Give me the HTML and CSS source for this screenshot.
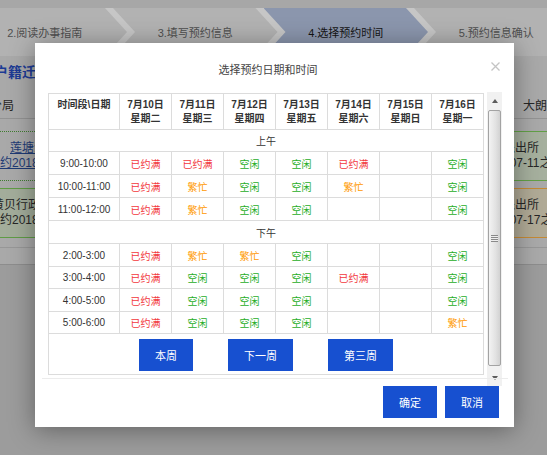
FILE: index.html
```html
<!DOCTYPE html>
<html lang="zh-CN">
<head>
<meta charset="utf-8">
<title>选择预约日期和时间</title>
<link rel="stylesheet" href="styles.css">
</head>
<body>
<div class="page">
  <div class="topstrip"></div>
  <div class="stepbar">
    <div class="step">2.阅读办事指南</div>
    <div class="step">3.填写预约信息</div>
    <div class="step active">4.选择预约时间</div>
    <div class="step">5.预约信息确认</div>
  </div>
  <div class="content">
    <div class="page-title">户籍迁入</div>
    <div class="prow head">
      <div class="pl"><div class="ln in-l1">分局</div></div>
      <div class="pr"><div class="ln in-r1">大朗派出所</div></div>
    </div>
    <div class="prow rowa">
      <div class="pl">
        <div class="ln link in-l2">莲塘派</div>
        <div class="ln link in-l3">预约2018</div>
      </div>
      <div class="pr">
        <div class="ln in-r2">莲塘派出所</div>
        <div class="ln in-r3">2018-07-11之前</div>
      </div>
    </div>
    <div class="prow rowb">
      <div class="pl">
        <div class="ln in-l4">黄贝行政</div>
        <div class="ln in-l3">预约2018</div>
      </div>
      <div class="pr">
        <div class="ln in-r2">黄贝派出所</div>
        <div class="ln in-r3">2018-07-17之前</div>
      </div>
    </div>
    <div class="pline"></div>
  </div>
</div>

<div class="modal">
  <div class="modal-head">
    <div class="modal-title">选择预约日期和时间</div>
    <span class="close"><svg width="9" height="9" viewBox="0 0 9 9"><path d="M0.5 0.5L8.5 8.5M8.5 0.5L0.5 8.5" stroke="#c4c4c4" stroke-width="1.3" fill="none"/></svg></span>
  </div>
  <div class="scrollbox">
    <div class="scroll-content">
      <table class="sched">
        <colgroup><col class="c0"><col><col><col><col><col><col><col></colgroup>
        <thead>
          <tr class="hrow">
            <th>时间段\日期</th>
            <th>7月10日<br>星期二</th>
            <th>7月11日<br>星期三</th>
            <th>7月12日<br>星期四</th>
            <th>7月13日<br>星期五</th>
            <th>7月14日<br>星期六</th>
            <th>7月15日<br>星期日</th>
            <th>7月16日<br>星期一</th>
          </tr>
        </thead>
        <tbody>
          <tr class="sec"><td colspan="8">上午</td></tr>
          <tr class="r23"><td>9:00-10:00</td><td class="full">已约满</td><td class="full">已约满</td><td class="free">空闲</td><td class="free">空闲</td><td class="full">已约满</td><td></td><td class="free">空闲</td></tr>
          <tr class="r23"><td>10:00-11:00</td><td class="full">已约满</td><td class="busy">繁忙</td><td class="free">空闲</td><td class="free">空闲</td><td class="busy">繁忙</td><td></td><td class="free">空闲</td></tr>
          <tr class="r23"><td>11:00-12:00</td><td class="full">已约满</td><td class="busy">繁忙</td><td class="free">空闲</td><td class="free">空闲</td><td></td><td></td><td class="free">空闲</td></tr>
          <tr class="sec r23"><td colspan="8">下午</td></tr>
          <tr class="r23"><td>2:00-3:00</td><td class="full">已约满</td><td class="busy">繁忙</td><td class="busy">繁忙</td><td class="free">空闲</td><td></td><td></td><td class="free">空闲</td></tr>
          <tr class="r22"><td>3:00-4:00</td><td class="full">已约满</td><td class="free">空闲</td><td class="free">空闲</td><td class="free">空闲</td><td class="full">已约满</td><td></td><td class="free">空闲</td></tr>
          <tr class="r23"><td>4:00-5:00</td><td class="full">已约满</td><td class="free">空闲</td><td class="free">空闲</td><td class="free">空闲</td><td></td><td></td><td class="free">空闲</td></tr>
          <tr class="r22"><td>5:00-6:00</td><td class="full">已约满</td><td class="free">空闲</td><td class="free">空闲</td><td class="free">空闲</td><td></td><td></td><td class="busy">繁忙</td></tr>
          <tr class="brow"><td colspan="8">
            <div class="weeks">
              <button class="btn">本周</button>
              <button class="btn">下一周</button>
              <button class="btn">第三周</button>
            </div>
          </td></tr>
        </tbody>
      </table>
    </div>
    <div class="vscroll">
      <div class="sarrow"><span class="tri-up"></span></div>
      <div class="thumb"><span class="grip"></span></div>
      <div class="sarrow"><span class="tri-down"></span></div>
    </div>
  </div>
  <div class="sep"></div>
  <div class="modal-foot">
    <button class="btn">确定</button>
    <button class="btn">取消</button>
  </div>
</div>
</body>
</html>
```

FILE: styles.css
```css
* { box-sizing: border-box; }
html, body { margin: 0; padding: 0; }
body {
  width: 547px;
  height: 455px;
  overflow: hidden;
  position: relative;
  background: #9c9c9c;
  font-family: "Liberation Sans", "Noto Sans CJK SC", sans-serif;
}

/* ---- dimmed background page ---- */
.page { height: 455px; display: flex; flex-direction: column; overflow: hidden; }
.topstrip { height: 8px; background: #a7a7a7; flex: none; }
.stepbar {
  height: 48px;
  flex: none;
  background: #c6c6c6;
  display: flex;
  overflow: hidden;
}
.step {
  flex: none;
  width: 164.5px;
  height: 48px;
  margin-right: -14px;
  background: #b2b2b2;
  clip-path: polygon(0 0, calc(100% - 22px) 0, 100% 50%, calc(100% - 22px) 100%, 0 100%, 22px 50%);
  display: flex;
  align-items: center;
  justify-content: center;
  font-size: 11px;
  color: #4f4f4f;
}
.step:first-child { margin-left: -37.5px; }
.step.active { background: #8b96ad; color: #141414; }

.content {
  flex: none;
  height: 209px;
  background: #a9a9a9;
  border-bottom: 1px solid #8d8d8d;
}
.page-title {
  width: 41px;
  overflow: hidden;
  height: 32px;
  line-height: 32px;
  margin-left: -6px;
  font-size: 14px;
  font-weight: bold;
  color: #1d3b94;
  white-space: nowrap;
}
.prow { display: flex; justify-content: space-between; }
.pl { width: 47px; margin-left: -12px; overflow: hidden; }
.pr { width: 33px; overflow: hidden; }
.ln { font-size: 12px; line-height: 15px; white-space: nowrap; color: #262626; }
.link { color: #1f3b75; text-decoration: underline; }
.in-l1 { padding-left: 2px; }
.in-l2 { padding-left: 22px; }
.in-l3 { padding-left: 0; }
.in-l4 { padding-left: 4px; }
.in-r1 { padding-left: 9px; }
.in-r2 { text-indent: -35px; }
.in-r3 { text-indent: -35px; }

.prow.head {
  height: 31px;
  padding-top: 11px;
  border-bottom: 1px solid #939393;
}
.prow.rowa { margin-top: 12px; height: 50px; }
.prow.rowa .pl {
  border-top: 1px dotted #3f7d30;
  border-bottom: 1px dotted #3f7d30;
  padding-top: 9px;
}
.prow.rowa .pr {
  background: #a6b09e;
  border-top: 1px solid #62a046;
  border-bottom: 1px solid #62a046;
  padding-top: 9px;
}
.prow.rowb { margin-top: 7px; height: 50px; }
.prow.rowb .pl {
  background: #a3ad9b;
  border-top: 1px solid #5f9c45;
  border-bottom: 1px solid #5f9c45;
  padding-top: 9px;
}
.prow.rowb .pr {
  background: #b0aa96;
  border-top: 1px solid #c58a34;
  border-bottom: 1px solid #c58a34;
  padding-top: 9px;
}
.pline { margin-top: 9px; border-top: 1px solid #979797; }

/* ---- modal ---- */
.modal {
  position: absolute;
  left: 35px;
  top: 43px;
  width: 479px;
  height: 384px;
  background: #fff;
  box-shadow: 0 3px 24px rgba(0, 0, 0, 0.38);
  display: flex;
  flex-direction: column;
  padding: 0 12px 9px 13px;
}
.modal-head {
  position: relative;
  height: 49px;
  flex: none;
  padding-top: 20px;
  padding-right: 14px;
  text-align: center;
}
.modal-title {
  font-size: 11px;
  line-height: 14px;
  color: #444;
}
.close {
  position: absolute;
  right: 2px;
  top: 19px;
  width: 9px;
  height: 9px;
  display: block;
}
.close svg { display: block; }

.scrollbox {
  height: 294px;
  flex: none;
  display: flex;
  gap: 3px;
}
.scroll-content { width: 436px; flex: none; padding-top: 1px; }

.sched {
  width: 436px;
  table-layout: fixed;
  border-collapse: collapse;
  border: 1px solid #dcdcdc;
}
.sched col.c0 { width: 71px; }
.sched th, .sched td {
  border: 1px solid #dcdcdc;
  padding: 0;
  text-align: center;
  font-size: 10px;
  color: #333;
}
.hrow th {
  height: 36px;
  vertical-align: top;
  padding-top: 4px;
  line-height: 14px;
  font-weight: bold;
}
.sec td { height: 22px; }
.r23 td { height: 23px; }
.r22 td { height: 22px; }
.sched td.full { color: #f2383c; }
.sched td.busy { color: #ff9900; }
.sched td.free { color: #27ae27; }
.brow td { height: 41px; padding-top: 1px; }

.weeks { display: flex; justify-content: center; gap: 35px; }

.btn {
  height: 32px;
  padding: 0 16px;
  border: none;
  border-radius: 0;
  background: #1750d0;
  color: #fff;
  font-family: "Liberation Sans", "Noto Sans CJK SC", sans-serif;
  font-size: 11px;
  cursor: pointer;
}

/* fake classic scrollbar */
.vscroll {
  width: 15px;
  flex: none;
  height: 294px;
  background: #f1f1f1;
  display: flex;
  flex-direction: column;
  align-items: center;
}
.sarrow {
  height: 17px;
  width: 15px;
  flex: none;
  display: flex;
  align-items: center;
  justify-content: center;
}
.tri-up {
  width: 0; height: 0;
  border-left: 3.5px solid transparent;
  border-right: 3.5px solid transparent;
  border-bottom: 4px solid #5c5c5c;
}
.tri-down {
  width: 0; height: 0;
  border-left: 3.5px solid transparent;
  border-right: 3.5px solid transparent;
  border-top: 4px solid #5c5c5c;
}
.thumb {
  width: 13px;
  height: 256px;
  flex: none;
  margin-top: 1px;
  margin-bottom: auto;
  border: 1px solid #a3a3a3;
  border-radius: 2px;
  background: linear-gradient(to right, #f3f3f3, #e2e2e2 60%, #d2d2d2);
  display: flex;
  align-items: center;
  justify-content: center;
}
.grip {
  width: 7px;
  height: 7px;
  background: repeating-linear-gradient(to bottom, #8a8a8a 0, #8a8a8a 1px, #eeeeee 1px, #eeeeee 2px);
}

.sep {
  flex: none;
  height: 1px;
  margin: -8px -6px 0;
  background: #ececec;
}
.modal-foot {
  flex: none;
  display: flex;
  justify-content: flex-end;
  gap: 8px;
  padding: 7px 3px 0 0;
}
```
